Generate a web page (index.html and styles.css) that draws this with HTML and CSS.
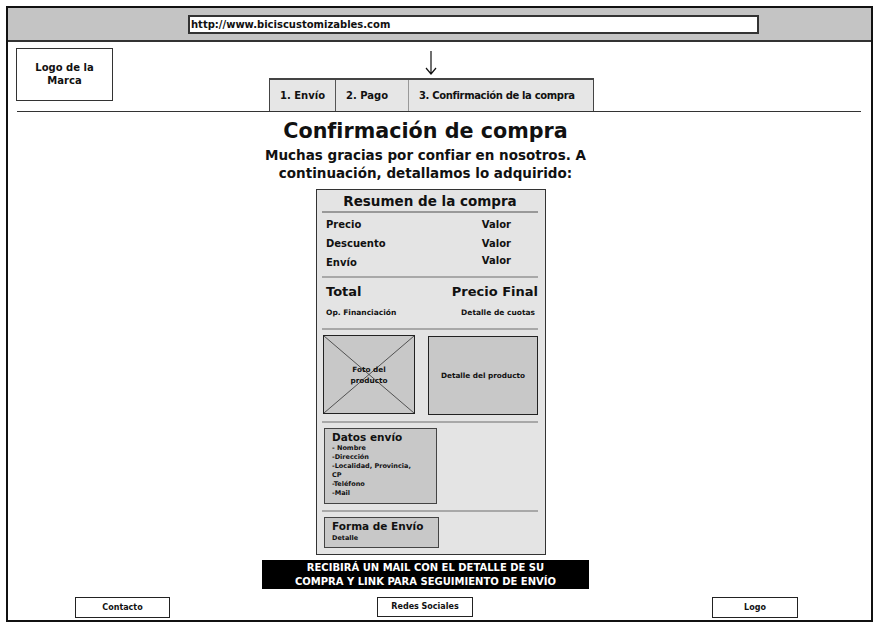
FILE: index.html
```html
<!DOCTYPE html>
<html lang="es">
<head>
  <meta charset="UTF-8" />
  <meta name="viewport" content="width=device-width, initial-scale=1.0" />
  <title>Bicis Customizables - Confirmación de compra</title>
  <link rel="stylesheet" href="styles.css">
</head>
<body>
  <div class="frame">
    <div class="browser-bar">
      <div class="url">http://www.biciscustomizables.com</div>
    </div>

    <header>
      <div class="brand">Logo de la<br>Marca</div>
      <div class="steps">
        <svg class="arrow" width="14" height="26" viewBox="0 0 14 26">
          <path d="M7 1 V24 M2 18 L7 24 L12 18" fill="none" stroke="#111" stroke-width="1.2"/>
        </svg>
        <nav>
          <a class="tab tab-1">1. Envío</a>
          <a class="tab tab-2">2. Pago</a>
          <a class="tab tab-3">3. Confirmación de la compra</a>
        </nav>
      </div>
    </header>
    <div class="divider"></div>

    <main>
      <h1>Confirmación de compra</h1>
      <p class="thanks">Muchas gracias por confiar en nosotros. A<br>continuación, detallamos lo adquirido:</p>

      <section class="summary">
        <h2>Resumen de la compra</h2>
        <div class="rows">
          <div class="row"><span>Precio</span><span class="val">Valor</span></div>
          <div class="row"><span>Descuento</span><span class="val">Valor</span></div>
          <div class="row"><span>Envío</span><span class="val up">Valor</span></div>
        </div>
        <div class="sep"></div>
        <div class="total">
          <span>Total</span><span>Precio Final</span>
        </div>
        <div class="financing">
          <span>Op. Financiación</span><span>Detalle de cuotas</span>
        </div>
        <div class="sep"></div>
        <div class="product">
          <div class="photo">
            <svg class="cross" viewBox="0 0 100 100" preserveAspectRatio="none">
              <path d="M0 0 L100 100 M100 0 L0 100" stroke="#333" stroke-width="0.8" vector-effect="non-scaling-stroke"/>
            </svg>
            <span>Foto del<br>producto</span>
          </div>
          <div class="detail">Detalle del producto</div>
        </div>
        <div class="sep"></div>
        <div class="box shipping">
          <h3>Datos envío</h3>
          <ul>
            <li>- Nombre</li>
            <li>-Dirección</li>
            <li>-Localidad, Provincia,<br>CP</li>
            <li>-Teléfono</li>
            <li>-Mail</li>
          </ul>
        </div>
        <div class="sep"></div>
        <div class="box method">
          <h3>Forma de Envío</h3>
          <p>Detalle</p>
        </div>
      </section>

      <div class="notice">Recibirá un mail con el detalle de su<br>compra y link para seguimiento de envío</div>
    </main>

    <footer>
      <a class="foot-btn contact">Contacto</a>
      <a class="foot-btn social">Redes Sociales</a>
      <a class="foot-btn logo">Logo</a>
    </footer>
  </div>
</body>
</html>
```

FILE: styles.css
```css
html, body {
  margin: 0;
  padding: 0;
  background: #fff;
  font-family: 'DejaVu Sans', sans-serif;
  color: #111;
}
*, *::before, *::after {
  box-sizing: border-box;
}

.frame {
  margin: 6px;
  width: 867px;
  height: 616px;
  border: 2px solid #111;
  display: flex;
  flex-direction: column;
}

.browser-bar {
  height: 34px;
  background: #c4c4c4;
  border-bottom: 2px solid #333;
  padding: 7px 0 0 180px;
}
.url {
  width: 571px;
  height: 19px;
  background: #fff;
  border: 2px solid #333;
  font-size: 10px;
  font-weight: bold;
  padding-left: 1px;
  line-height: 15px;
}

header {
  display: flex;
  align-items: flex-start;
  padding: 6px 0 0 8px;
  height: 69px;
}
.brand {
  width: 97px;
  height: 53px;
  border: 1.5px solid #333;
  text-align: center;
  font-size: 10px;
  font-weight: bold;
  line-height: 13px;
  padding-top: 12px;
}
.steps {
  margin-left: 156px;
  display: flex;
  flex-direction: column;
}
.arrow {
  margin: 2px 0 2px 155px;
}
nav {
  display: flex;
  height: 33px;
  background: #e6e6e6;
  border: 1px solid #444;
  border-top-width: 2px;
  border-bottom: none;
}
.tab {
  font-size: 10px;
  font-weight: bold;
  padding: 0 10px;
  line-height: 32px;
  border-left: 1px solid #555;
  white-space: nowrap;
}
.tab-1 { border-left: none; width: 65px; }
.tab-2 { width: 73px; }
.tab-3 { width: 185px; border-left-color: #999; letter-spacing: -0.35px; }

.divider {
  height: 2px;
  background: #333;
  margin: 0 10px 0 9px;
}

main {
  flex: 1;
  display: flex;
  flex-direction: column;
  align-items: center;
  padding-right: 28px;
}
h1 {
  font-size: 20.7px;
  margin: 6px 0 0;
  line-height: 26px;
}
.thanks {
  font-size: 13.5px;
  font-weight: bold;
  text-align: center;
  line-height: 17.5px;
  margin: 3px 0 0;
}

.summary {
  margin: 7px 0 0 11px;
  width: 230px;
  height: 366px;
  background: #e4e4e4;
  border: 1.5px solid #333;
  padding: 0 7px 0 5px;
}
.summary h2 {
  font-size: 13.5px;
  text-align: center;
  margin: 0;
  line-height: 20px;
  padding-top: 1px;
  border-bottom: 2px solid #999;
}
.rows {
  padding: 2px 27px 0 4px;
}
.row {
  display: flex;
  justify-content: space-between;
  font-size: 10px;
  font-weight: bold;
  line-height: 19px;
}
.val.up {
  position: relative;
  top: -2px;
}
.sep {
  height: 2px;
  background: #a8a8a8;
  margin: 4px 0 0;
}
.total {
  display: flex;
  justify-content: space-between;
  font-size: 13px;
  font-weight: bold;
  padding: 4px 0 0 4px;
  line-height: 20px;
}
.financing {
  display: flex;
  justify-content: space-between;
  font-size: 7.5px;
  font-weight: bold;
  padding: 4px 3px 0 4px;
  line-height: 14px;
  height: 22px;
}

.product {
  display: flex;
  justify-content: space-between;
  padding: 5px 0 0 1px;
  height: 87px;
}
.photo, .detail {
  height: 79px;
  background: #c8c8c8;
  border: 1.5px solid #222;
  font-size: 7.3px;
  font-weight: bold;
  display: flex;
  align-items: center;
  justify-content: center;
  text-align: center;
}
.photo {
  width: 92px;
  position: relative;
  line-height: 11px;
}
.cross {
  position: absolute;
  inset: 0;
  width: 100%;
  height: 100%;
}
.photo span {
  position: relative;
}
.detail {
  width: 110px;
  margin-top: 1px;
}

.box {
  background: #c8c8c8;
  border: 1px solid #444;
  margin: 5px 0 0 2px;
  padding: 2px 0 0 7px;
}
.box h3 {
  font-size: 10.5px;
  margin: 0;
  line-height: 13px;
}
.shipping {
  width: 113px;
  height: 76px;
  margin-bottom: 6px;
}
.shipping ul {
  list-style: none;
  margin: 0;
  padding: 0;
  font-size: 6.5px;
  font-weight: bold;
  line-height: 9px;
}
.method {
  width: 115px;
  height: 31px;
}
.method p {
  margin: 0;
  font-size: 6.5px;
  font-weight: bold;
  line-height: 10px;
}

.notice {
  margin-top: 5px;
  width: 327px;
  height: 29px;
  background: #000;
  color: #fff;
  text-transform: uppercase;
  text-align: center;
  font-size: 10px;
  font-weight: bold;
  line-height: 13.5px;
  padding-top: 1px;
}

footer {
  display: flex;
  height: 31px;
  padding: 8px 0 0 0;
  align-items: flex-start;
}
.foot-btn {
  height: 21px;
  border: 1.5px solid #222;
  font-size: 8px;
  font-weight: bold;
  text-align: center;
  line-height: 20px;
}
.contact { width: 95px; margin-left: 67px; }
.social { width: 96px; margin-left: 207px; height: 20px; line-height: 18px; }
.logo { width: 86px; margin-left: 239px; }
```
